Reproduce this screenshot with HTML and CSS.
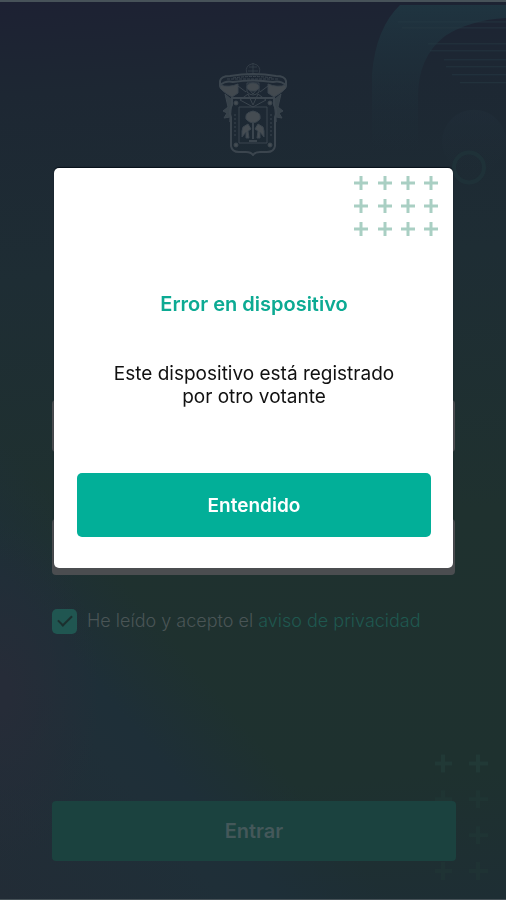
FILE: index.html
```html
<!DOCTYPE html>
<html lang="es">
<head>
<meta charset="utf-8">
<meta name="viewport" content="width=device-width, initial-scale=1">
<title>Error en dispositivo</title>
<link rel="stylesheet" href="styles.css">
</head>
<body>
<div class="screen">
  <svg class="backdrop" viewBox="0 0 506 900" preserveAspectRatio="none" aria-hidden="true">
    <defs>
      <linearGradient id="ring" x1="0" y1="0" x2="0" y2="1">
        <stop offset="0" stop-color="#1f3440"/>
        <stop offset="1" stop-color="#1e2f38" stop-opacity="0"/>
      </linearGradient>
      <linearGradient id="disc" x1="0" y1="0" x2="0" y2="1">
        <stop offset="0" stop-color="#212e3a"/>
        <stop offset="1" stop-color="#202f38" stop-opacity="0"/>
      </linearGradient>
    </defs>
    <path d="M372 150V72Q376 26 400 3H506V16Q470 18 445 34Q418 55 418 95V150Z" fill="url(#ring)"/>
    <path d="M398 20H506M402 26H506M428 42H506M430 49H506M444 58H506M446 65H506M452 73H506M460 81H506" stroke="#263b45" stroke-opacity=".7"/>
    <circle cx="474" cy="140" r="32" fill="url(#disc)" opacity=".5"/>
    <circle cx="469" cy="166" r="15" fill="none" stroke="#20343a" stroke-width="4" opacity=".7"/>
    <g stroke="#223b38" stroke-width="4" opacity=".8">
      <path d="M435 764H452M443 755V773M469 764H488M478 755V773"/>
      <path d="M435 800H452M443 791V809M469 800H488M478 791V809" opacity=".5"/>
      <path d="M469 836H488M478 827V845" opacity=".6"/>
      <path d="M435 872H452M443 863V881M469 872H488M478 863V881" opacity=".5"/>
    </g>
  </svg>
  <main class="login">
    <svg class="emblem" viewBox="0 0 70 94" fill="none" stroke="#3b454e" role="img" aria-label="Escudo">
      <path d="M30 13Q26 7 31 3Q35 0 39 3Q44 7 40 13ZM35 1V13M31 5H39M30 9H40" opacity=".7"/>
      <path d="M2 19Q3 14 12 14Q35 10 58 14Q67 14 68 19V23Q62 18 55 20Q35 17 15 20Q8 18 2 23Z" stroke-width="2"/>
      <path d="M9 17H61M15 16Q35 13 55 16" stroke-dasharray="3 1"/>
      <path d="M2 23Q11 26 20 22L20 31L14 35Q5 30 2 26ZM68 23Q59 26 50 22L50 31L56 35Q65 30 68 26Z" fill="#42494f"/>
      <path d="M7 32L10 45L5 49L9 51L6 56L12 55L12 60L14 38ZM63 32L60 45L65 49L61 51L64 56L58 55L58 60L56 38Z" fill="#3f4850" fill-opacity=".8"/>
      <path d="M14 36H56V43Q60 49 57 55V84Q56 90 49 90H42Q37 90 35 93Q33 90 28 90H21Q14 90 13 84V55Q10 49 14 43Z" stroke-width="2"/>
      <path d="M21 45H49V81H21Z"/>
      <path d="M22 38L30 32L35 43L40 32L48 38L35 45ZM29 25L35 32L41 25M29 21H41V30Q35 36 29 30ZM20 24L28 30M50 24L42 30"/>
      <ellipse cx="35" cy="25" rx="6" ry="4" fill="#42494f"/>
      <g fill="#454c52">
        <circle cx="18" cy="41" r="2"/><circle cx="52" cy="41" r="2"/><circle cx="18" cy="83" r="2"/><circle cx="52" cy="83" r="2"/>
        <path d="M28 57Q27 51 32 50Q35 48 38 50Q43 51 42 57Q37 62 35 60Q33 62 28 57Z"/>
        <path d="M25 65L30 62L33 67L30 69L31 76H28V70L24 75V69ZM45 65L40 62L37 67L40 69L39 76H42V70L46 75V69Z"/>
      </g>
      <path d="M35 60V77M31 79H39" stroke-width="2"/>
      <path d="M17 52V75M53 52V75" stroke-dasharray="2 2"/>
    </svg>
    <form class="form">
      <div class="field"></div>
      <div class="field"></div>
      <div class="consent">
        <input class="check" id="privacy" type="checkbox" checked>
        <label for="privacy">He leído y acepto el <a href="#privacidad">aviso de privacidad</a></label>
      </div>
      <button class="submit" type="button">Entrar</button>
    </form>
  </main>
</div>
<div class="overlay">
  <section class="dialog" role="dialog" aria-modal="true" aria-labelledby="dialog-title">
    <svg class="pluses" viewBox="0 0 84 60" fill="none" stroke="#a9cfc3" stroke-width="3" aria-hidden="true">
      <path d="M0 7H14M24 7H38M47 7H61M70 7H84M0 30H14M24 30H38M47 30H61M70 30H84M0 53H14M24 53H38M47 53H61M70 53H84"/>
      <path d="M7 0V14M31 0V14M54 0V14M77 0V14M7 23V37M31 23V37M54 23V37M77 23V37M7 46V60M31 46V60M54 46V60M77 46V60"/>
    </svg>
    <h1 class="title" id="dialog-title">Error en dispositivo</h1>
    <p class="message">Este dispositivo está registrado<br>por otro votante</p>
    <button class="accept" type="button">Entendido</button>
  </section>
</div>
</body>
</html>
```
FILE: styles.css
```css
* {
  box-sizing: border-box;
}

body {
  margin: 0;
  font-family: Inter, "Liberation Sans", sans-serif;
  font-size: 18px;
}

.screen {
  position: relative;
  min-height: 100vh;
  display: flex;
  border-top: 2px solid #475259;
  border-bottom: 1px solid #465157;
  background:
    radial-gradient(ellipse 100px 170px at 0 77%, #262c38 10%, transparent 100%),
    linear-gradient(50deg, #222c36 0%, #1f2f38 18%, #1e2f38 22%, transparent 31%),
    linear-gradient(176deg, #1d2133 0%, #1d2733 10%, #1e2d34 30%, #1f312f 58%, #1e312f 86%, #1e2e34 100%);
}

.backdrop {
  position: absolute;
  inset: 0;
  width: 100%;
  height: 100%;
}

.login {
  position: relative;
  flex: 1;
  display: flex;
  flex-direction: column;
  padding: 60px 50px 38px 52px;
}

.emblem {
  width: 70px;
  height: 94px;
  margin-left: calc(50% - 36px);
}

.form {
  flex: 1;
  display: flex;
  flex-direction: column;
  padding-top: 244px;
}

.field {
  height: 52px;
  margin: 0 1px 67px 0;
  border-radius: 4px;
  background: #4b4d50;
}

.field + .field {
  height: 56px;
  margin-bottom: 32px;
}

.consent {
  display: flex;
  align-items: center;
  gap: 10px;
  line-height: 28px;
  font-weight: 300;
  color: #4a5556;
}

.consent a {
  color: #1f5850;
  text-decoration: none;
}

.check {
  appearance: none;
  width: 25px;
  height: 25px;
  margin: 0;
  border-radius: 5px;
  background: #205651;
  display: grid;
  place-items: center;
}

.check::before {
  content: "";
  width: 12px;
  height: 6px;
  border-left: 2px solid #1c302f;
  border-bottom: 2px solid #1c302f;
  transform: translateY(-2px) rotate(-45deg);
}

.submit {
  height: 60px;
  margin-top: auto;
  border: 0;
  border-radius: 4px;
  background: #1b423f;
  color: #44585a;
  font: 600 20px Inter, "Liberation Sans", sans-serif;
}

.overlay {
  position: fixed;
  inset: 0;
  display: flex;
  align-items: center;
  padding: 0 53px 164px 54px;
}

.dialog {
  position: relative;
  flex: 1;
  display: flex;
  flex-direction: column;
  padding: 124px 22px 31px 23px;
  border-radius: 5px;
  background: #fff;
  box-shadow: 0 -1px 1px #071019;
  text-align: center;
}

.pluses {
  position: absolute;
  top: 8px;
  right: 15px;
  width: 84px;
  height: 60px;
}

.title {
  margin: 0 0 46px;
  color: #0caa93;
  font-size: 20px;
  font-weight: 600;
  line-height: 24px;
}

.message {
  margin: 0 0 65px;
  color: #111;
  font-size: 19px;
  line-height: 23px;
}

.accept {
  height: 64px;
  border: 0;
  border-radius: 5px;
  background: #02af98;
  color: #fff;
  font: 600 19px Inter, "Liberation Sans", sans-serif;
}
```
